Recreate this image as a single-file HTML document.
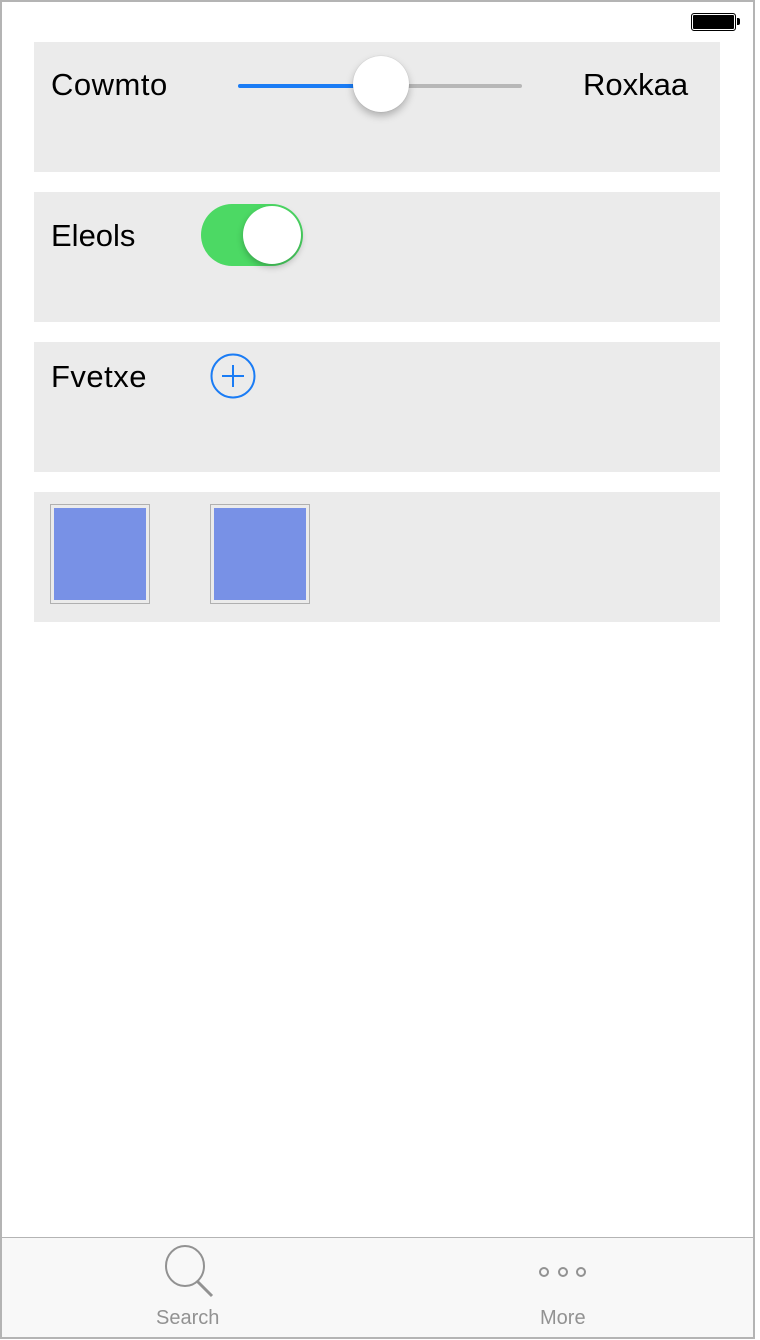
<!DOCTYPE html>
<html><head><style>
*{margin:0;padding:0;box-sizing:border-box}
body{width:760px;height:1340px;background:#fff;position:relative;font-family:"Liberation Sans",sans-serif;overflow:hidden}
.frame{position:absolute;left:0;top:0;width:755px;height:1339px;border:2px solid #b4b4b4}
.sec{position:absolute;left:34px;width:686px;height:130px;background:#ebebeb}
.t{position:absolute;font-size:31px;color:#000}
.tab{position:absolute;left:2px;top:1237px;width:751px;height:100px;background:#f8f8f8;border-top:1px solid #b4b4b4}
.lbl{position:absolute;font-size:20px;color:#929292}
</style></head><body>
<div class="frame"></div>
<div style="position:absolute;left:691px;top:13px;width:45px;height:18px;border:1px solid #000;border-radius:3px;background:#000;box-shadow:inset 0 0 0 1px #fff"></div>
<div style="position:absolute;left:737px;top:18px;width:3px;height:7px;background:#000;border-radius:0 2px 2px 0"></div>

<div class="sec" style="top:42px"></div>
<div class="t" style="left:51px;top:67px;letter-spacing:0.5px">Cowmto</div>
<div class="t" style="left:583px;top:67px">Roxkaa</div>
<div style="position:absolute;left:238px;top:84px;width:143px;height:4px;background:#1a7cf5;border-radius:2px"></div>
<div style="position:absolute;left:381px;top:84px;width:141px;height:4px;background:#b7b7b7;border-radius:2px"></div>
<div style="position:absolute;left:353px;top:56px;width:56px;height:56px;border-radius:50%;background:#fff;box-shadow:0 4px 8px rgba(0,0,0,.25),0 0 1px rgba(0,0,0,.2)"></div>

<div class="sec" style="top:192px"></div>
<div class="t" style="left:51px;top:218px">Eleols</div>
<div style="position:absolute;left:201px;top:204px;width:102px;height:62px;border-radius:31px;background:#4cd964"></div>
<div style="position:absolute;left:243px;top:206px;width:58px;height:58px;border-radius:50%;background:#fff;box-shadow:0 3px 7px rgba(0,0,0,.25)"></div>

<div class="sec" style="top:342px"></div>
<div class="t" style="left:51px;top:359px;letter-spacing:0.5px">Fvetxe</div>
<svg style="position:absolute;left:210px;top:353px" width="46" height="46"><circle cx="23" cy="23" r="21.5" fill="none" stroke="#1a7cf5" stroke-width="2"/><path d="M23 12V34M12 23H34" stroke="#1a7cf5" stroke-width="2"/></svg>

<div class="sec" style="top:492px"></div>
<div style="position:absolute;left:50px;top:504px;width:100px;height:100px;border:1px solid #b0b0b0;padding:3px"><div style="width:100%;height:100%;background:#7891e6"></div></div>
<div style="position:absolute;left:210px;top:504px;width:100px;height:100px;border:1px solid #b0b0b0;padding:3px"><div style="width:100%;height:100%;background:#7891e6"></div></div>

<div class="tab"></div>
<svg style="position:absolute;left:160px;top:1244px" width="60" height="56"><ellipse cx="25" cy="22" rx="19" ry="20" fill="none" stroke="#929292" stroke-width="2"/><path d="M37 37L52 52" stroke="#929292" stroke-width="3"/></svg>
<div class="lbl" style="left:156px;top:1307px">Search</div>
<svg style="position:absolute;left:535px;top:1262px" width="60" height="20"><circle cx="9" cy="10" r="4" fill="none" stroke="#929292" stroke-width="2"/><circle cx="28" cy="10" r="4" fill="none" stroke="#929292" stroke-width="2"/><circle cx="46" cy="10" r="4" fill="none" stroke="#929292" stroke-width="2"/></svg>
<div class="lbl" style="left:540px;top:1307px">More</div>
</body></html>
